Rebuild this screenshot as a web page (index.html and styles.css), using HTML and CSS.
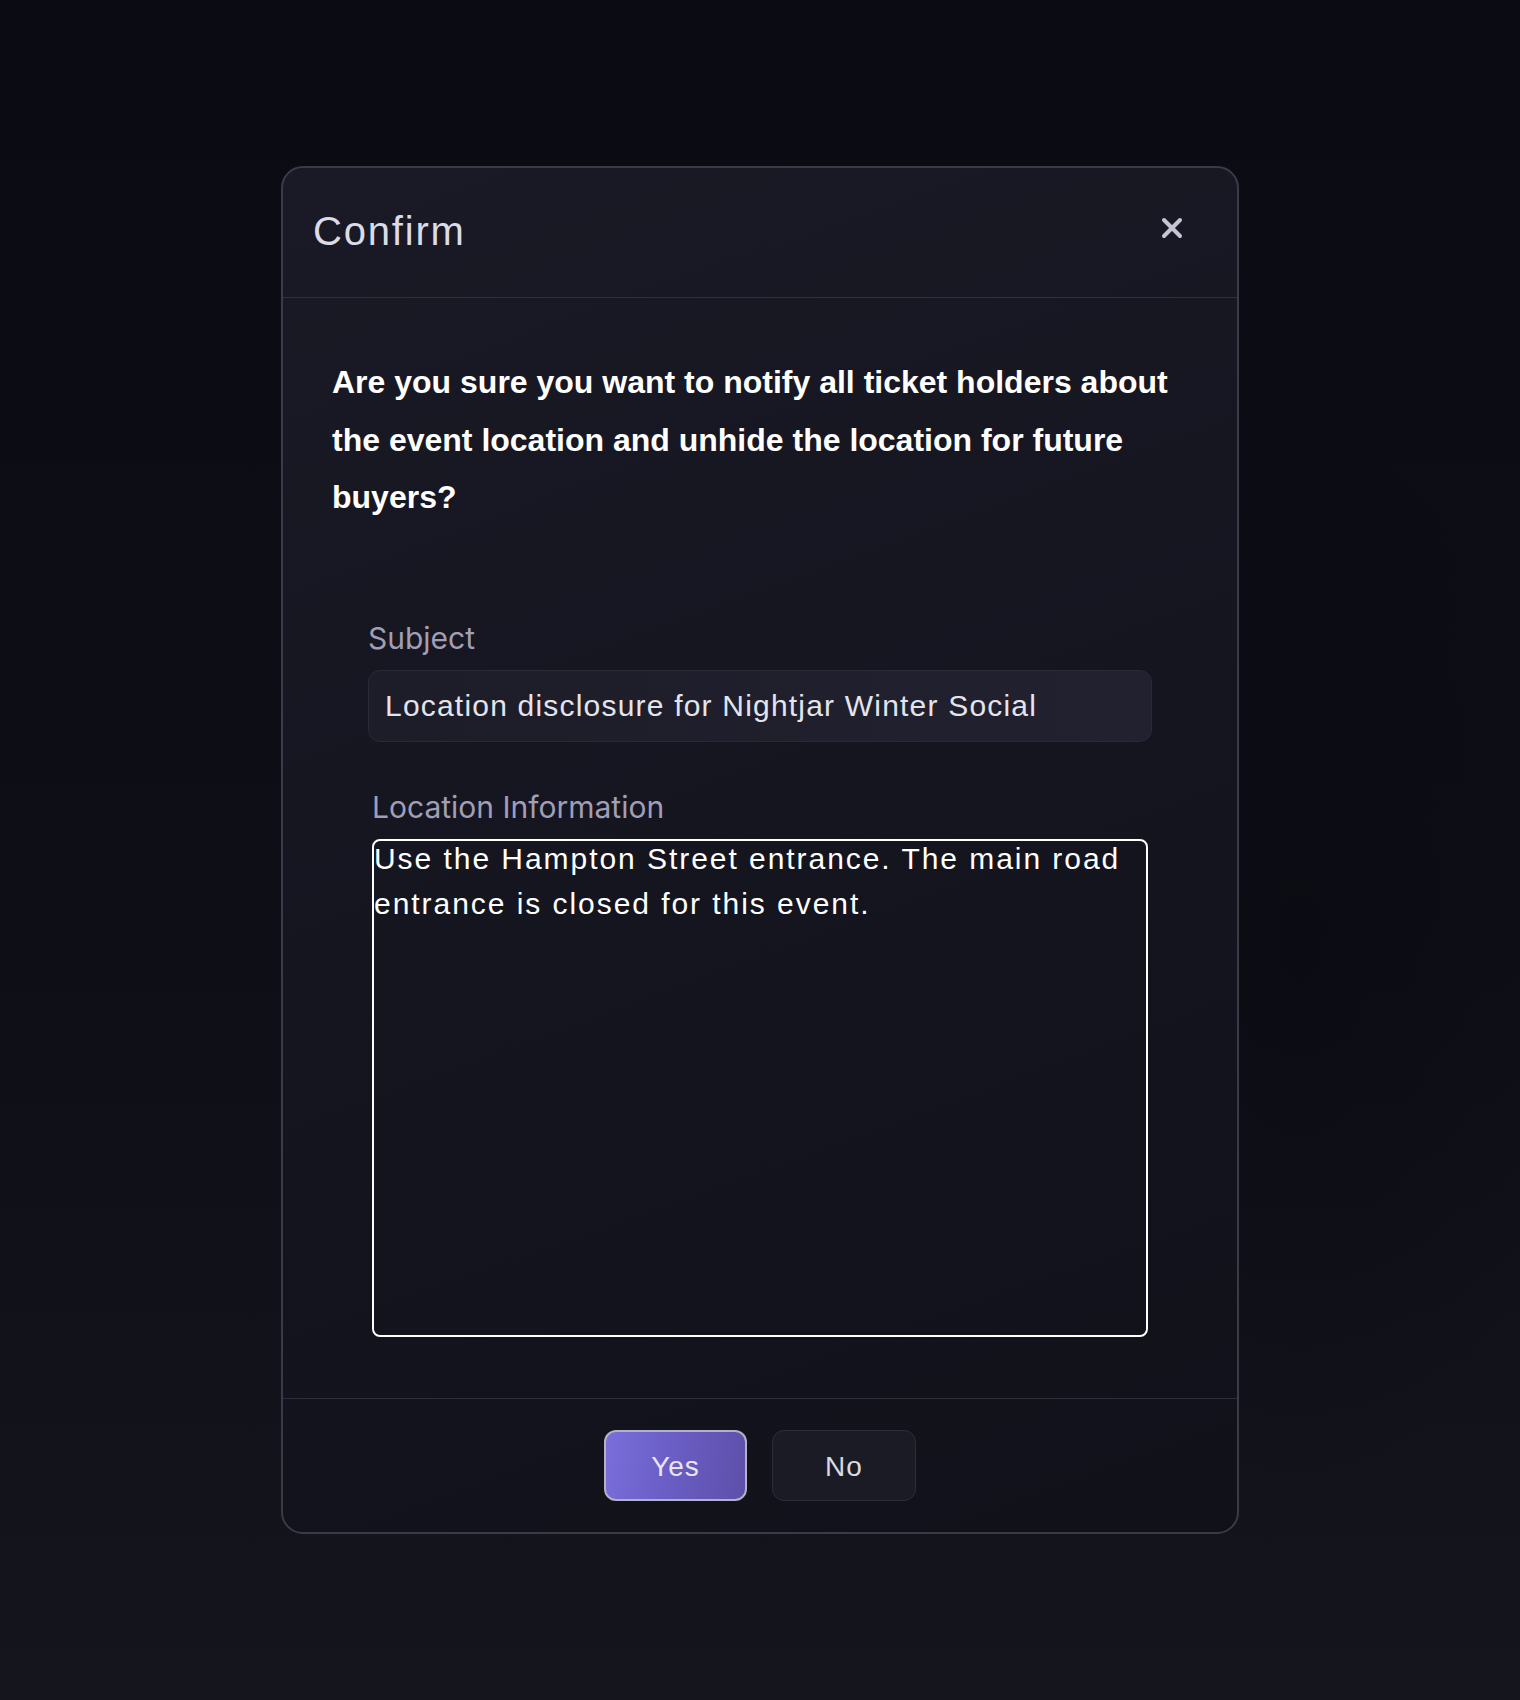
FILE: index.html
```html
<!DOCTYPE html>
<html lang="en">
<head>
<meta charset="utf-8">
<title>Confirm</title>
<link rel="stylesheet" href="styles.css">
</head>
<body>
<div class="page">
  <div class="dialog">
    <div class="dialog-header">
      <h2 class="dialog-title">Confirm</h2>
      <button class="close-btn" aria-label="Close">
        <svg width="22" height="22" viewBox="0 0 22 22"><path d="M3 3 L19 19 M19 3 L3 19" stroke="#c6c4d4" stroke-width="4" stroke-linecap="round" fill="none"/></svg>
      </button>
    </div>
    <div class="dialog-body">
      <p class="question">Are you sure you want to notify all ticket holders about the event location and unhide the location for future buyers?</p>
      <div class="form">
        <div class="field">
          <label class="field-label">Subject</label>
          <input class="text-input" type="text" value="Location disclosure for Nightjar Winter Social">
        </div>
        <div class="field field-location">
          <label class="field-label">Location Information</label>
          <div class="text-area-box">
            <textarea class="text-area">Use the Hampton Street entrance. The main road entrance is closed for this event.</textarea>
          </div>
        </div>
      </div>
    </div>
    <div class="dialog-footer">
      <button class="btn btn-yes">Yes</button>
      <button class="btn btn-no">No</button>
    </div>
  </div>
</div>
</body>
</html>
```
FILE: styles.css
```css
* { box-sizing: border-box; }
html, body { margin: 0; padding: 0; }
body {
  width: 1520px;
  min-height: 1700px;
  background:
    radial-gradient(ellipse 420px 800px at 1300px 950px, rgba(8,8,14,0.45), rgba(8,8,14,0) 70%),
    linear-gradient(180deg, #0b0b14 0%, #0e0e17 55%, #15151e 100%);
  font-family: "Liberation Sans", Arial, sans-serif;
}
.page {
  padding-top: 166px;
  display: flex;
  justify-content: center;
}
.dialog {
  width: 958px;
  border: 2px solid #3b3b47;
  border-radius: 22px;
  background: linear-gradient(160deg, #1a1a26 0%, #151520 50%, #11111a 100%);
  overflow: hidden;
}
.dialog-header {
  height: 130px;
  border-bottom: 1px solid #2f2f3b;
  display: flex;
  align-items: center;
  justify-content: space-between;
  padding: 0 45px 0 30px;
}
.dialog-title {
  margin: 0 0 2px 0;
  font-family: "Liberation Sans", Arial, sans-serif;
  font-weight: 400;
  font-size: 40px;
  letter-spacing: 1.8px;
  color: #dcdce6;
}
.close-btn {
  width: 40px;
  height: 40px;
  margin-bottom: 9px;
  padding: 0;
  border: 0;
  background: transparent;
  display: flex;
  align-items: center;
  justify-content: center;
}
.dialog-body {
  padding: 56px 49px 61px 49px;
}
.question {
  margin: 0;
  font-family: "Liberation Sans", Arial, sans-serif;
  font-weight: 700;
  font-size: 32px;
  line-height: 57.6px;
  color: #ffffff;
}
.form {
  margin-top: 94px;
  padding: 0 36px;
  display: flex;
  flex-direction: column;
  gap: 48px;
}
.field {
  display: flex;
  flex-direction: column;
  gap: 14px;
}
.field-location { margin: 0 4px; }
.field-label {
  font-family: Inter, "Noto Sans", sans-serif;
  font-size: 30px;
  line-height: 35px;
  color: #a19eb6;
}
.text-input {
  height: 72px;
  width: 100%;
  border: 1px solid #2a2a36;
  border-radius: 12px;
  background: linear-gradient(90deg, #1d1d29 0%, #212130 100%);
  padding: 0 16px;
  font-family: "Liberation Sans", Arial, sans-serif;
  font-size: 30px;
  letter-spacing: 1.2px;
  color: #e4e4ec;
  outline: none;
}
.text-area-box {
  height: 498px;
  border: 2px solid #ffffff;
  border-radius: 8px;
  overflow: hidden;
}
.text-area {
  display: block;
  width: 100%;
  height: 499px;
  margin-top: -5px;
  border: 0;
  background: transparent;
  padding: 0;
  resize: none;
  outline: none;
  font-family: "Liberation Sans", Arial, sans-serif;
  font-size: 30px;
  line-height: 45px;
  letter-spacing: 1.95px;
  color: #ffffff;
}
.dialog-footer {
  border-top: 1px solid #2f2f3b;
  padding: 31px 0 31px;
  display: flex;
  justify-content: center;
  gap: 25px;
}
.btn {
  width: 143px;
  height: 71px;
  border-radius: 12px;
  font-family: "Liberation Sans", Arial, sans-serif;
  font-size: 28px;
  letter-spacing: 1px;
  padding: 3px 0 0 0;
}
.btn-yes {
  border: 2px solid #b3b1c6;
  background: linear-gradient(100deg, #7a6fdb 0%, #6c5fc8 40%, #5d4fa8 100%);
  color: #e8e6f2;
}
.btn-no {
  width: 144px;
  border: 1px solid #2d2d39;
  background: #1b1b25;
  color: #d9d9e2;
}
```
